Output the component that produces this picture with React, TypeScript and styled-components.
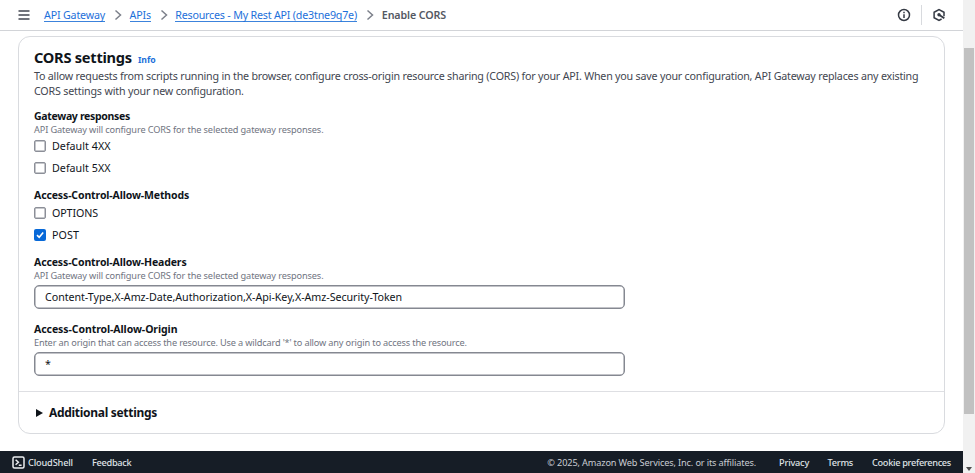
import React, { useState } from "react";
import styled, { createGlobalStyle } from "styled-components";

const GlobalStyle = createGlobalStyle`
  * { box-sizing: border-box; }
  body {
    margin: 0;
    background: #fff;
    color: #0f141a;
    font-family: "Noto Sans", "Open Sans", sans-serif;
    font-size: 10.7px;
    overflow: hidden;
  }
`;

const Screen = styled.div`
  display: grid;
  grid-template-columns: 963px 12px;
  height: 473px;
`;

const Page = styled.div`
  display: flex;
  flex-direction: column;
  min-width: 0;
`;

const TopBar = styled.header`
  display: flex;
  align-items: center;
  height: 31px;
  padding: 0 17px 0 18px;
  border-bottom: 1px solid #d2d4d8;
`;

const MenuIcon = styled.svg`
  width: 12px;
  height: 12px;
  margin-right: 14px;
  fill: none;
  stroke: #424650;
  stroke-width: 1.6;
`;

const Crumbs = styled.nav`
  display: flex;
  align-items: center;
  flex: 1;
`;

const CrumbLink = styled.a<{ $track: number; $width: number }>`
  width: ${(p) => p.$width}px;
  height: 14px;
  line-height: 15px;
  color: #1d70da;
  border-bottom: 1px solid #3c83dc;
  letter-spacing: ${(p) => p.$track}px;
  white-space: nowrap;
`;

const CrumbCurrent = styled.span`
  color: #545863;
  font-weight: 600;
  line-height: 14px;
  letter-spacing: -0.11px;
`;

const Chevron = styled.svg`
  width: 8px;
  height: 12px;
  margin: 0 7.6px 0 9px;
  fill: none;
  stroke: #7c808a;
  stroke-width: 1.5;
`;

const ToolIcon = styled.svg`
  width: 14px;
  height: 14px;
  fill: none;
  stroke: #353a44;
  stroke-width: 1.5;
`;

const ToolDivider = styled.span`
  width: 1px;
  height: 20px;
  margin: 0 10px 0 10px;
  background: #d8dade;
`;

const Content = styled.main`
  flex: 1;
  padding: 5px 18px 0;
`;

const Card = styled.section`
  width: 927px;
  height: 398px;
  border: 1px solid #d9dbdf;
  border-radius: 12px;
  display: flex;
  flex-direction: column;
`;

const CardBody = styled.div`
  height: 355px;
  padding: 10px 15px 0;
  border-bottom: 1px solid #dedfe3;
`;

const TitleRow = styled.div`
  display: flex;
  align-items: baseline;
  height: 22px;
  line-height: 20px;
`;

const Title = styled.h1`
  margin: 0 6px 0 0;
  font-size: 14.6px;
  letter-spacing: -0.25px;
`;

const InfoLink = styled.a`
  color: #1d70da;
  font-size: 8.7px;
  font-weight: 700;
`;

const Description = styled.p`
  margin: 0 0 10px;
  color: #424650;
  line-height: 15px;
`;

const Line = styled.span<{ $track: number }>`
  display: block;
  white-space: nowrap;
  letter-spacing: ${(p) => p.$track}px;
`;

const Group = styled.div<{ $height: number }>`
  height: ${(p) => p.$height}px;
`;

const Label = styled.div<{ $track: number }>`
  height: 14px;
  line-height: 14px;
  font-size: 10.5px;
  font-weight: 700;
  letter-spacing: ${(p) => p.$track}px;
`;

const Hint = styled.div<{ $track: number }>`
  height: 13px;
  line-height: 13px;
  color: #70747f;
  font-size: 9.2px;
  letter-spacing: ${(p) => p.$track}px;
`;

const Options = styled.div<{ $top: number }>`
  display: flex;
  flex-direction: column;
  gap: 7.5px;
  padding-top: ${(p) => p.$top}px;
`;

const Option = styled.label<{ $track: number }>`
  display: flex;
  align-items: center;
  gap: 6px;
  height: 14px;
  line-height: 14px;
  letter-spacing: ${(p) => p.$track}px;
`;

const HiddenCheck = styled.input`
  appearance: none;
  display: none;
`;

const Box = styled.span<{ $on: boolean }>`
  display: grid;
  place-items: center;
  width: 12px;
  height: 12px;
  border: ${(p) => (p.$on ? "0" : "1px solid #8c8f98")};
  border-radius: 2px;
  background: ${(p) => (p.$on ? "#0869d8" : "#fff")};
  box-shadow: ${(p) => (p.$on ? "none" : "inset 0 0 0 0.5px #8c8f98")};
`;

const Tick = styled.svg`
  width: 12px;
  height: 12px;
  fill: none;
  stroke: #fff;
  stroke-width: 1.6;
`;

const Field = styled.input`
  display: block;
  width: 591px;
  height: 24px;
  margin-top: 2.5px;
  padding: 0 10px;
  border: 1px solid #858891;
  border-radius: 5px;
  box-shadow: inset 0 0 0 0.5px #858891;
  outline: none;
  color: #0f141a;
  background: #fff;
  font: inherit;
  letter-spacing: -0.045px;
`;

const Expander = styled.button`
  display: flex;
  align-items: center;
  gap: 6px;
  flex: 1;
  padding: 0 17px;
  border: 0;
  background: none;
  color: #0f141a;
  font: 700 12px "Noto Sans", sans-serif;
  letter-spacing: -0.3px;
`;

const Caret = styled.svg`
  width: 7px;
  height: 8px;
  fill: #0f141a;
`;

const Footer = styled.footer`
  display: flex;
  align-items: center;
  height: 22px;
  padding: 1px 12px 0;
  background: #161d26;
  color: #dfe1e5;
  font-size: 9.2px;
  white-space: nowrap;
`;

const ShellIcon = styled.svg`
  width: 13px;
  height: 13px;
  margin-right: 3px;
  fill: none;
  stroke: #eceef1;
  stroke-width: 1.5;
`;

const FooterLink = styled.a<{ $track: number; $gap: number }>`
  margin-right: ${(p) => p.$gap}px;
  font-weight: 500;
  letter-spacing: ${(p) => p.$track}px;
`;

const Copyright = styled.span`
  margin-left: auto;
  margin-right: 23px;
  color: #c9ccd2;
  letter-spacing: -0.145px;
`;

const ScrollTrack = styled.div`
  display: flex;
  flex-direction: column;
  justify-content: space-between;
  align-items: center;
  padding: 48px 0 2px;
  background: #f1f1f1;
`;

const ScrollThumb = styled.div`
  width: 10px;
  height: 366px;
  background: #c1c1c1;
`;

const ScrollArrow = styled.svg`
  width: 6px;
  height: 4px;
  fill: #4d4d4d;
`;

const Separator = () => (
  <Chevron viewBox="0 0 8 12">
    <path d="M1.5 1.5 6.5 6 1.5 10.5" />
  </Chevron>
);

function CheckOption(props: { text: string; track: number; initial?: boolean }) {
  const [on, setOn] = useState(!!props.initial);
  return (
    <Option $track={props.track}>
      <HiddenCheck type="checkbox" checked={on} onChange={() => setOn(!on)} />
      <Box $on={on}>
        {on && (
          <Tick viewBox="0 0 12 12">
            <path d="M3 6.2 5.2 8.3 9.2 3.6" />
          </Tick>
        )}
      </Box>
      {props.text}
    </Option>
  );
}

export default function App() {
  return (
    <Screen>
      <GlobalStyle />
      <Page>
        <TopBar>
          <MenuIcon viewBox="0 0 12 12">
            <path d="M.5 2H11.5M.5 6H11.5M.5 10H11.5" />
          </MenuIcon>
          <Crumbs>
            <CrumbLink $track={-0.18} $width={61}>API Gateway</CrumbLink>
            <Separator />
            <CrumbLink $track={-0.18} $width={21}>APIs</CrumbLink>
            <Separator />
            <CrumbLink $track={-0.197} $width={182}>Resources - My Rest API (de3tne9q7e)</CrumbLink>
            <Separator />
            <CrumbCurrent>Enable CORS</CrumbCurrent>
          </Crumbs>
          <ToolIcon viewBox="0 0 14 14">
            <circle cx="7" cy="7" r="5.5" />
            <path d="M7 6.2V10M7 3.8V5.2" />
          </ToolIcon>
          <ToolDivider />
          <ToolIcon viewBox="0 0 14 14">
            <path d="M12 8.2V4.3L7 1.6 2.1 4.3V9.7L7 12.4 9.6 11" />
            <path d="M7 6.8 12.3 10.2" strokeWidth="1.9" />
            <circle cx="7" cy="6.8" r="1.7" fill="#353a44" stroke="none" />
          </ToolIcon>
        </TopBar>
        <Content>
          <Card>
            <CardBody>
              <TitleRow>
                <Title>CORS settings</Title>
                <InfoLink>Info</InfoLink>
              </TitleRow>
              <Description>
                <Line $track={-0.206}>
                  To allow requests from scripts running in the browser, configure cross-origin resource sharing (CORS) for your API. When you save your configuration, API Gateway replaces any existing
                </Line>
                <Line $track={-0.176}>CORS settings with your new configuration.</Line>
              </Description>
              <Group $height={79}>
                <Label $track={-0.32}>Gateway responses</Label>
                <Hint $track={-0.12}>API Gateway will configure CORS for the selected gateway responses.</Hint>
                <Options $top={3}>
                  <CheckOption text="Default 4XX" track={0.03} />
                  <CheckOption text="Default 5XX" track={0.03} />
                </Options>
              </Group>
              <Group $height={67}>
                <Label $track={-0.13}>Access-Control-Allow-Methods</Label>
                <Options $top={4}>
                  <CheckOption text="OPTIONS" track={-0.11} />
                  <CheckOption text="POST" track={0.08} initial />
                </Options>
              </Group>
              <Group $height={67}>
                <Label $track={-0.13}>Access-Control-Allow-Headers</Label>
                <Hint $track={-0.12}>API Gateway will configure CORS for the selected gateway responses.</Hint>
                <Field defaultValue="Content-Type,X-Amz-Date,Authorization,X-Api-Key,X-Amz-Security-Token" />
              </Group>
              <Group $height={60}>
                <Label $track={-0.075}>Access-Control-Allow-Origin</Label>
                <Hint $track={-0.16}>
                  Enter an origin that can access the resource. Use a wildcard '*' to allow any origin to access the resource.
                </Hint>
                <Field defaultValue="*" />
              </Group>
            </CardBody>
            <Expander>
              <Caret viewBox="0 0 7 8">
                <path d="M0 0 7 4 0 8Z" />
              </Caret>
              Additional settings
            </Expander>
          </Card>
        </Content>
        <Footer>
          <ShellIcon viewBox="0 0 13 13">
            <rect x="1" y="1" width="11" height="11" rx="1.5" />
            <path d="M3.6 3.8 6.4 6.3 3.6 8.8M6.8 9.3H9.6" />
          </ShellIcon>
          <FooterLink $track={-0.15} $gap={19}>CloudShell</FooterLink>
          <FooterLink $track={-0.28} $gap={0}>Feedback</FooterLink>
          <Copyright>© 2025, Amazon Web Services, Inc. or its affiliates.</Copyright>
          <FooterLink $track={-0.21} $gap={18.5}>Privacy</FooterLink>
          <FooterLink $track={-0.28} $gap={19}>Terms</FooterLink>
          <FooterLink $track={-0.31} $gap={0}>Cookie preferences</FooterLink>
        </Footer>
      </Page>
      <ScrollTrack>
        <ScrollThumb />
        <ScrollArrow viewBox="0 0 6 4">
          <path d="M0 0H6L3 4Z" />
        </ScrollArrow>
      </ScrollTrack>
    </Screen>
  );
}
